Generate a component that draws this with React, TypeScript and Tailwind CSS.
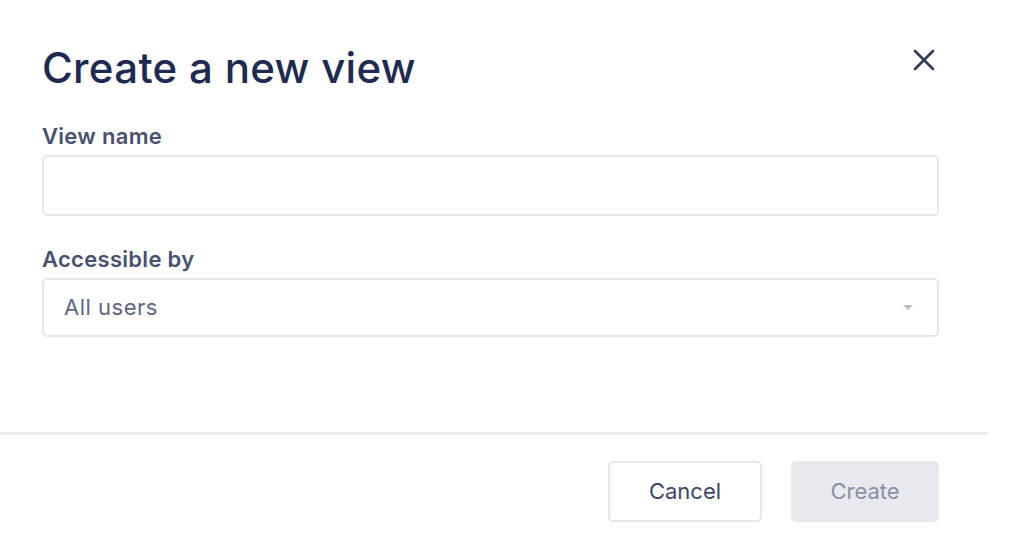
import React from 'react';

const App: React.FC = () => {
  return (
    <div className="w-[1018px] h-[548px] bg-white overflow-hidden font-['Inter',sans-serif]">
      <div className="w-[988px] pt-[42px]">
        <div className="flex items-start justify-between pl-[42px] pr-[50px]">
          <h1 className="text-[42px] leading-[52px] font-medium text-[#1e2a4f] tracking-[0.3px]">Create a new view</h1>
          <button className="mt-[4px] w-[28px] h-[28px] flex items-center justify-center text-[#2f3a5c]">
            <svg width="24" height="24" viewBox="0 0 24 24" fill="none" stroke="currentColor" strokeWidth="2.6" strokeLinecap="round">
              <path d="M3 3 L21 21 M21 3 L3 21" />
            </svg>
          </button>
        </div>

        <div className="pl-[42px] pr-[49px] mt-[29px]">
          <label className="block text-[22px] leading-[26px] font-semibold text-[#4a5170] tracking-[0.3px]">View name</label>
          <div className="mt-[6px] h-[61px] rounded-[5px] border-2 border-[#e6e7ec]" />

          <label className="block mt-[30px] text-[22px] leading-[26px] font-semibold text-[#4a5170] tracking-[0.3px]">Accessible by</label>
          <div className="mt-[6px] h-[59px] rounded-[5px] border-2 border-[#e6e7ec] flex items-center justify-between pl-[20px] pr-[24px]">
            <span className="text-[22px] text-[#5f6680] tracking-[0.5px]">All users</span>
            <svg width="10" height="6" viewBox="0 0 10 6">
              <path d="M0 0 L10 0 L5 5 Z" fill="#b8bbc7" />
            </svg>
          </div>
        </div>

        <div className="mt-[95px] h-[3px] bg-[#ebecf0]" />

        <div className="flex justify-end gap-[29px] pr-[49px] mt-[26px]">
          <button className="w-[154px] h-[61px] rounded-[5px] border-2 border-[#e6e7ec] bg-white text-[22px] text-[#3c4463]">Cancel</button>
          <button className="w-[148px] h-[61px] rounded-[5px] bg-[#e8e9ee] text-[22px] text-[#8a90a6]">Create</button>
        </div>
      </div>
    </div>
  );
};

export default App;
